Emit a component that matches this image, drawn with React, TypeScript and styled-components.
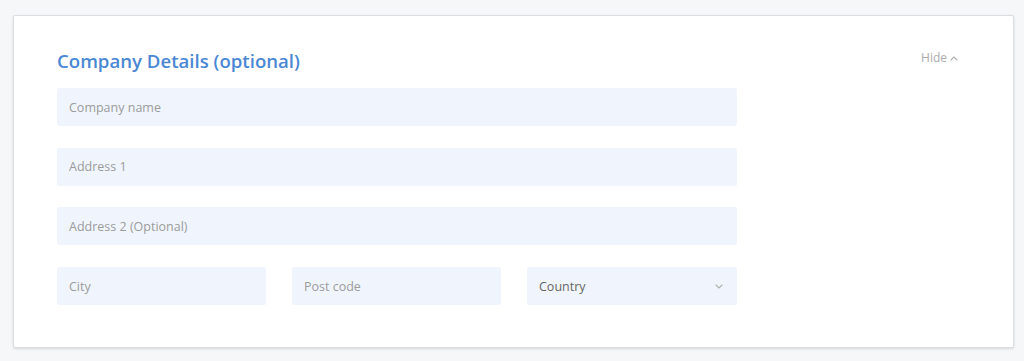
import React from "react";
import styled, { createGlobalStyle } from "styled-components";

const Global = createGlobalStyle`
  html, body { margin: 0; padding: 0; background: #f6f7f9; }
  body { font-family: "Open Sans", "Noto Sans", sans-serif; }
  * { box-sizing: border-box; }
`;

const Page = styled.div`
  padding: 15px 10px 14px 13px;
`;

const Card = styled.section`
  background: #fff;
  border: 1px solid #dcdde0;
  border-radius: 2px;
  box-shadow: 0 1px 3px rgba(0, 0, 0, 0.12);
  height: 333px;
  padding: 31px 55px 0 43px;
`;

const Header = styled.div`
  display: flex;
  justify-content: space-between;
  align-items: flex-start;
  height: 28px;
`;

const Title = styled.h2`
  margin: 0;
  font-size: 18.6px;
  font-weight: 600;
  color: #4a87d4;
  line-height: 27px;
`;

const Toggle = styled.button`
  background: none;
  border: 0;
  padding: 0;
  margin-top: 3px;
  display: flex;
  align-items: center;
  gap: 3px;
  font-family: inherit;
  font-size: 12px;
  line-height: 16px;
  color: #ababab;
  cursor: pointer;
`;

const Form = styled.div`
  width: 680px;
  margin-top: 13px;
  display: flex;
  flex-direction: column;
  gap: 21.7px;
`;

const Row = styled.div`
  display: grid;
  grid-template-columns: 209px 209px 210px;
  column-gap: 26px;
`;

const Field = styled.div<{ $dark?: boolean }>`
  height: 38px;
  background: #f0f5fd;
  border-radius: 2px;
  display: flex;
  align-items: center;
  justify-content: space-between;
  padding: 0 14px 0 12px;
  font-size: 12.5px;
  color: ${(p) => (p.$dark ? "#666" : "#9b9b9b")};
`;

const Chevron = ({ up }: { up?: boolean }) => (
  <svg width="8" height="5" viewBox="0 0 8 5" fill="none">
    <path
      d={up ? "M1 4L4 1L7 4" : "M1 1L4 4L7 1"}
      stroke="#b0b0b0"
      strokeWidth="1.1"
      strokeLinecap="round"
      strokeLinejoin="round"
    />
  </svg>
);

export default function App() {
  return (
    <>
      <Global />
      <Page>
        <Card>
          <Header>
            <Title>Company Details (optional)</Title>
            <Toggle>
              Hide <Chevron up />
            </Toggle>
          </Header>
          <Form>
            <Field>Company name</Field>
            <Field>Address 1</Field>
            <Field>Address 2 (Optional)</Field>
            <Row>
              <Field>City</Field>
              <Field>Post code</Field>
              <Field $dark>
                Country <Chevron />
              </Field>
            </Row>
          </Form>
        </Card>
      </Page>
    </>
  );
}
